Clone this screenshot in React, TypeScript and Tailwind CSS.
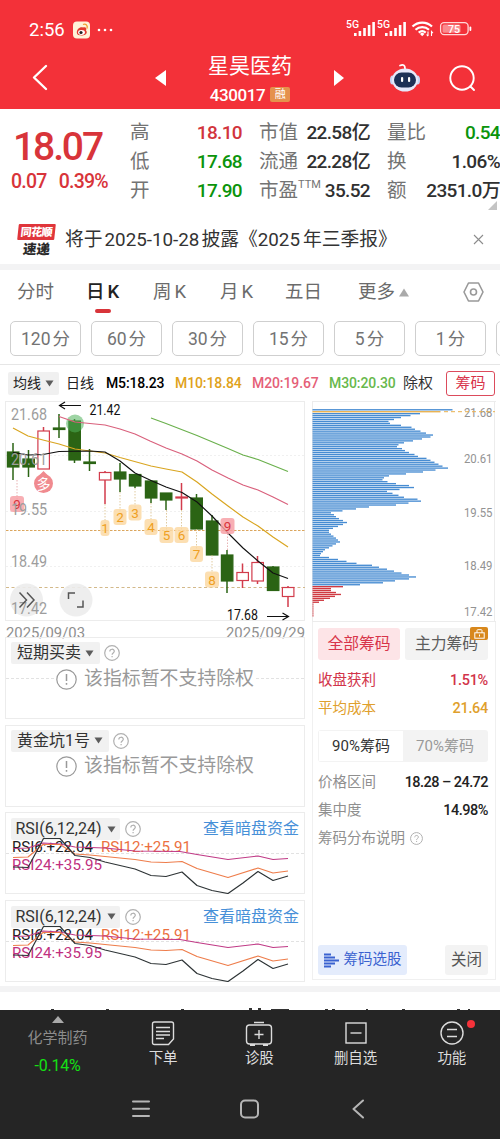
import { useState } from 'react'

const candles = [
  { x: 13, top: 452, bottom: 467, high: 443, low: 480, up: false },
  { x: 28.5, top: 459, bottom: 467, high: 450, low: 477, up: false },
  { x: 43.5, top: 431, bottom: 469, high: 427, low: 469, up: true },
  { x: 59, top: 428, bottom: 429.5, high: 414, low: 438, up: false },
  { x: 74.5, top: 421, bottom: 460, high: 419, low: 463, up: false },
  { x: 89.5, top: 462, bottom: 463.5, high: 449, low: 471, up: false },
  { x: 105, top: 472.5, bottom: 480, high: 471, low: 504, up: true },
  { x: 120, top: 472, bottom: 479, high: 463, low: 492, up: false },
  { x: 135, top: 474.5, bottom: 486, high: 474, low: 488, up: false },
  { x: 151, top: 481, bottom: 498, high: 480, low: 503, up: false },
  { x: 166, top: 493, bottom: 500, high: 493, low: 510, up: false },
  { x: 181.5, top: 497, bottom: 498, high: 483, low: 510, up: true },
  { x: 196.5, top: 498, bottom: 529, high: 494, low: 529, up: false },
  { x: 212, top: 521, bottom: 555, high: 515, low: 555, up: false },
  { x: 227, top: 555, bottom: 581, high: 550, low: 593, up: false },
  { x: 242.5, top: 572.5, bottom: 580.5, high: 563.5, low: 588, up: true },
  { x: 257.5, top: 562.5, bottom: 581, high: 556, low: 584, up: true },
  { x: 273, top: 567, bottom: 590.5, high: 566, low: 590, up: false },
  { x: 288, top: 587.5, bottom: 596.5, high: 586, low: 607, up: true },
]

const marks = [
  { n: '9', x: 17, y: 504, w: 14, from: 480, hot: true },
  { n: '1', x: 105, y: 528, w: 9, from: 504, hot: false },
  { n: '2', x: 120, y: 517, w: 13, from: 492, hot: false },
  { n: '3', x: 135, y: 512.5, w: 13, from: 488, hot: false },
  { n: '4', x: 151, y: 527, w: 13, from: 503, hot: false },
  { n: '5', x: 166.5, y: 535, w: 14, from: 510, hot: false },
  { n: '6', x: 181.5, y: 535, w: 14, from: 510, hot: false },
  { n: '7', x: 196.5, y: 554, w: 13, from: 529, hot: false },
  { n: '8', x: 212, y: 579.5, w: 14, from: 555, hot: false },
  { n: '9', x: 227.5, y: 526, w: 14, from: 550, hot: true },
]

const chips = [
  140, 128, 107.5, 98, 88.5, 81.5, 76, 77.5, 88.5, 99, 102.5, 108, 113.5, 120.5, 118, 109.5, 100.5, 91.5,
  86, 84.5, 89.5, 92.5, 96.5, 102, 105.5, 114, 118, 122, 126, 130, 135.5, 123, 110.5, 93.5, 76.5, 71.5,
  70, 75, 83.5, 96.5, 101.5, 87, 74.5, 80, 86, 91.5, 105, 108.5, 96, 83.5, 56.5, 43.5, 30, 18.5, 21.5,
  23.5, 26.5, 30.5, 34.5, 30.5, 25.5, 20.5, 16.5, 16.5, 18.5, 21, 23.5, 25.5, 27.5, 23.5, 20, 16.5, 12.5,
  10.5, 8.5, 7.5, 16.5, 25.5, 34, 44, 59.5, 66.5, 74.5, 81.5, 89, 96.5, 103.5, 96.5, 82.5, 70.5, 47.5,
  30.5, 18.5, 18.5, 23.5, 28.5, 22.5, 17.5, 11.5, 6.5, 1, 1, 1, 1, 1, 1, 1,
]
const FIRST_RED = 91

const axis = [
  { label: '21.68', left: 420, right: 416 },
  { label: '20.61', left: 464.5, right: 462 },
  { label: '19.55', left: 515, right: 515.5 },
  { label: '18.49', left: 566.5, right: 569 },
  { label: '17.42', left: 613.5, right: 614.5 },
]

const quotes = [
  [
    { label: '高', value: '18.10', color: 'text-[#d2343c]' },
    { label: '低', value: '17.68', color: 'text-[#0b940b]' },
    { label: '开', value: '17.90', color: 'text-[#0b940b]' },
  ],
  [
    { label: '市值', value: '22.58亿', color: 'text-[#303030]' },
    { label: '流通', value: '22.28亿', color: 'text-[#303030]' },
    { label: '市盈', sup: 'TTM', value: '35.52', color: 'text-[#303030]' },
  ],
  [
    { label: '量比', value: '0.54', color: 'text-[#0b940b]' },
    { label: '换', value: '1.06%', color: 'text-[#303030]' },
    { label: '额', value: '2351.0万', color: 'text-[#303030]' },
  ],
]
const quoteWidths = ['ml-[130px] w-[112px]', 'ml-[17px] w-[111px]', 'ml-[17px] w-[113px]']

const tabs = [
  ['分时', ''],
  ['日', 'K'],
  ['周', 'K'],
  ['月', 'K'],
  ['五日', ''],
]
const periods = [120, 60, 30, 15, 5, 1]

function StatusBar() {
  return (
    <div className="flex h-[50px] items-end pb-[10px] pl-[29px]">
      <span className="w-[44px] text-[18.500px] leading-5">2:56</span>
      <svg width="42" height="20" viewBox="0 0 42 20">
        <rect x="0" y="1.500" width="17" height="17" rx="4" fill="#fff3d8" />
        <path d="M4 13.500c-1-4 3-7 6-6 3-1 4 1 3 3 2 2 0 5-4 5-3 0-5-1-5-2z" fill="#e33a2e" />
        <ellipse cx="8.500" cy="12.500" rx="3.400" ry="2.400" fill="#fff" />
        <circle cx="8" cy="12.500" r="1.600" fill="#222" />
        <path d="M10 4.500c3-1 5 1 4 4" fill="none" stroke="#f0a030" strokeWidth="1.300" />
        <circle cx="26" cy="10" r="1.300" fill="#fff" />
        <circle cx="32" cy="10" r="1.300" fill="#fff" />
        <circle cx="38" cy="10" r="1.300" fill="#fff" />
      </svg>
      <svg className="mr-[26px] ml-auto" width="130" height="22" viewBox="344 19 130 22" fill="#fff">
        {[0, 31].map((dx) => (
          <g key={dx}>
            <text x={346 + dx} y="29" fontSize="10.500" fontWeight="500" textLength="13" lengthAdjust="spacingAndGlyphs">5G</text>
            <rect x={354 + dx} y="34" width="2.600" height="3" />
            <rect x={358.6 + dx} y="32" width="2.600" height="5" />
            <rect x={363.2 + dx} y="29" width="2.600" height="8" />
            <rect x={367.8 + dx} y="26" width="2.600" height="11" />
            <rect x={372.3 + dx} y="23" width="2.600" height="14" />
          </g>
        ))}
        <g fill="none" stroke="#fff" strokeWidth="2.200">
          <path d="M412.500 27.500a14 14 0 0 1 19.500 0" />
          <path d="M415.500 30.700a10 10 0 0 1 13.500 0" />
          <path d="M418.700 33.600a5.500 5.500 0 0 1 7 0" />
        </g>
        <path d="M422.200 37.300l-2.200-2.300a3 3 0 0 1 4.400 0z" />
        <path d="M428 32.500v4.500M426.600 35.500l1.400 1.700M431.500 37v-4.500l1.400 1.700" stroke="#fff" strokeWidth="1.100" fill="none" />
        <rect x="440.600" y="23.600" width="27.500" height="12" rx="3.500" fill="none" stroke="#ffd9d9" strokeWidth="1.300" />
        <rect x="442.500" y="25.500" width="18" height="8.200" rx="1.500" fill="#fa8b8f" />
        <rect x="469.500" y="27.500" width="1.800" height="4.500" rx="0.900" />
        <text x="448" y="33.500" fontSize="10.500" fontWeight="500" textLength="12">75</text>
      </svg>
    </div>
  )
}

function TitleBar() {
  return (
    <div className="flex h-[59px] items-center pb-1">
      <svg className="ml-[32px]" width="16" height="27" viewBox="0 0 16 27" fill="none" stroke="#fff" strokeWidth="2.400" strokeLinecap="round" strokeLinejoin="round">
        <path d="M14 2L2 13.500L14 25" />
      </svg>
      <svg className="ml-[107px]" width="11" height="16" viewBox="0 0 11 16" fill="#fff">
        <path d="M11 0v16L0 8z" />
      </svg>
      <div className="ml-6 flex w-[120px] flex-col items-center pt-[4px]">
        <h1 className="text-[21px] leading-[30px]">星昊医药</h1>
        <div className="flex h-[28px] items-center gap-[5px]">
          <span className="pt-px text-[17px] leading-5 font-medium tracking-[-0.400px]">430017</span>
          <span className="flex h-[15px] w-5 items-center justify-center rounded-[2px] bg-[#e5914c] text-[11px] leading-none">融</span>
        </div>
      </div>
      <svg className="ml-6" width="10" height="16" viewBox="0 0 10 16" fill="#fff">
        <path d="M0 0v16L10 8z" />
      </svg>
      <svg className="ml-[45px]" width="32" height="30" viewBox="0 0 32 30">
        <path d="M11 2.500q5-2 5 3" fill="none" stroke="#fff" strokeWidth="1.800" strokeLinecap="round" />
        <ellipse cx="3.500" cy="17" rx="2.500" ry="4.500" fill="#c9d5f5" />
        <ellipse cx="28.500" cy="17" rx="2.500" ry="4.500" fill="#c9d5f5" />
        <ellipse cx="16" cy="17" rx="13" ry="11.500" fill="#e6e9fb" />
        <rect x="5" y="9.500" width="22" height="15" rx="7.500" fill="#1d3157" />
        <rect x="12" y="14" width="2.200" height="5" rx="1" fill="#fff" />
        <rect x="19" y="14" width="2.200" height="5" rx="1" fill="#fff" />
      </svg>
      <svg className="ml-[28px]" width="27" height="28" viewBox="0 0 27 28" fill="none" stroke="#fff" strokeWidth="1.900" strokeLinecap="round">
        <circle cx="13" cy="14" r="11.700" />
        <path d="M21.500 22.500l3.500 3.500" />
      </svg>
    </div>
  )
}

function QuotePanel() {
  return (
    <section className="relative flex h-[106px]">
      <div className="absolute top-[19px] left-0 w-[122px] text-[#d8343a]">
        <p className="pl-[13px] text-[39px] leading-[39px] font-medium tracking-[-2.100px]">18.07</p>
        <p className="mt-[5px] flex gap-3 pl-[11px] text-[19.500px] leading-5 font-medium tracking-[-0.750px]">
          <span>0.07</span>
          <span>0.39%</span>
        </p>
      </div>
      {quotes.map((col, i) => (
        <dl key={i} className={`${quoteWidths[i]} shrink-0 pt-[9px]`}>
          {col.map((q) => (
            <div key={q.label} className="flex h-[29px] items-center justify-between whitespace-nowrap">
              <dt className="flex text-[19.500px] leading-7 text-[#737373]">
                {q.label}
                {'sup' in q && <span className="-mt-1 text-[11px] leading-6">{q.sup}</span>}
              </dt>
              <dd className={`${q.color} text-[19px] leading-7 font-medium tracking-[-0.650px]`}>{q.value}</dd>
            </div>
          ))}
        </dl>
      ))}
      <svg className="absolute right-[3px] bottom-[5px]" width="9" height="9" viewBox="0 0 9 9" fill="#c4c4c4">
        <path d="M9 0v9H0z" />
      </svg>
    </section>
  )
}

function Notice() {
  return (
    <section className="flex h-[49px] items-center pl-[17px]">
      <div className="flex w-[38px] flex-col items-center pt-[1px]">
        <span className="flex h-[16px] w-[37px] -skew-x-6 items-center justify-center rounded-[1px] bg-[#e0353b] text-[11px] leading-none font-black tracking-[-0.500px] text-white">
          同花顺
        </span>
        <span className="mt-[2px] -skew-x-6 text-[13.500px] leading-[14px] font-black text-[#2b2b2b]">速递</span>
      </div>
      <p className="ml-[10px] text-[18.800px] leading-7 whitespace-nowrap text-[#333]">
        将于<span className="mx-[2px]">2025-10-28</span>披露《<span className="mr-[3px]">2025</span>年三季报》
      </p>
      <svg className="mr-4 ml-auto" width="11" height="11" viewBox="0 0 11 11" stroke="#8c8c8c" strokeWidth="1.100">
        <path d="M1 1l9 9M10 1l-9 9" />
      </svg>
    </section>
  )
}

function Tabs() {
  const [active, setActive] = useState(1)
  return (
    <nav className="flex h-[46px] items-start pt-2 pl-[2px] text-[18.500px] leading-7 text-[#6b6b6b]">
      {tabs.map(([name, suffix], i) => (
        <button
          key={name}
          onClick={() => setActive(i)}
          className={`relative flex w-[67px] justify-center gap-[3px] ${i === active ? 'font-medium text-[#222]' : ''}`}
        >
          {name}
          {suffix && <span>{suffix}</span>}
          {i === active && <span className="absolute top-[31px] h-1 w-4 rounded-full bg-[#d8343a]" />}
        </button>
      ))}
      <button className="ml-[21px] flex items-center gap-[4px]">
        更多
        <svg width="10" height="9" viewBox="0 0 10 9" fill="#aaa">
          <path d="M5 0.500L10 8.500H0z" />
        </svg>
      </button>
      <svg className="mt-[4px] mr-4 ml-auto" width="21" height="20" viewBox="0 0 21 20" fill="none" stroke="#999" strokeWidth="1.600">
        <path d="M5.500 1h10L20 10l-4.500 9h-10L1 10z" strokeLinejoin="round" />
        <circle cx="10.500" cy="10" r="3" />
      </svg>
    </nav>
  )
}

function Periods() {
  return (
    <div className="flex h-[49px] gap-[10px] overflow-hidden border-b border-[#e6e6e6] pt-[5px] pl-[10px]">
      {periods.map((p) => (
        <button
          key={p}
          className="flex h-[35px] w-[71px] shrink-0 items-center justify-center gap-[2px] rounded-[5px] border border-[#cfcfcf] text-[17.500px] leading-7 text-[#737373]"
        >
          <span>{p}</span>
          <span>分</span>
        </button>
      ))}
      <span className="h-[35px] w-[71px] shrink-0 rounded-[5px] border border-[#cfcfcf]" />
    </div>
  )
}

function Caret() {
  return (
    <svg width="9" height="7" viewBox="0 0 9 7" fill="#5c5c5c">
      <path d="M0.500 0.500h8L4.500 6.500z" />
    </svg>
  )
}

function Help({ size = 16 }: { size?: number }) {
  return (
    <svg width={size} height={size} viewBox="0 0 16 16" fill="none" stroke="#b0b0b0" strokeWidth="1.200">
      <circle cx="8" cy="8" r="7.300" />
      <path d="M5.800 6.500c0-3 4.500-3 4.500-0.200 0 1.700-2.200 1.700-2.200 3.400M8.100 11v1.300" />
    </svg>
  )
}

function Averages() {
  return (
    <div className="flex h-[36px] items-center pl-2 text-[14px] leading-none font-medium whitespace-nowrap">
      <button className="flex h-[23px] w-[51px] items-center justify-center gap-[4px] rounded-[2px] bg-[#f0f0f0] font-normal text-[#222]">
        均线
        <Caret />
      </button>
      <span className="ml-[7px] w-[40px] font-normal text-[#222]">日线</span>
      <span className="w-[69px] tracking-[-0.150px] text-black">M5:18.23</span>
      <span className="w-[77px] tracking-[-0.100px] text-[#e0a21b]">M10:18.84</span>
      <span className="w-[77px] tracking-[-0.100px] text-[#e55f78]">M20:19.67</span>
      <span className="w-[74px] tracking-[-0.100px] text-[#67b84c]">M30:20.30</span>
      <span className="text-[15px] font-normal text-[#333]">除权</span>
      <button className="mr-[5px] ml-auto h-[25px] w-[49px] rounded-[3px] border border-[#dc4b5c] text-[15px] font-normal text-[#d8344a]">
        筹码
      </button>
    </div>
  )
}

function CandleChart() {
  return (
    <svg className="block overflow-visible" width="300" height="237" viewBox="5 401 300 237">
      <rect x="5.500" y="401.500" width="299" height="219" fill="none" stroke="#ececec" />
      <path d="M6 455.500H305M6 511.500H305M6 566.500H305" stroke="#f0f0f0" strokeDasharray="2 2" />
      <path d="M6 530.500H305" stroke="#dba65e" strokeDasharray="2.500 1.500" />
      <path d="M6 587.500H305" stroke="#d3b98a" strokeDasharray="3 2.500" />

      {candles.map((c) => {
        const color = c.up ? '#d23c4c' : '#2b6414'
        return (
          <g key={c.x} stroke={color}>
            <path d={`M${c.x} ${c.high}V${c.top}M${c.x} ${c.bottom}V${c.low}`} strokeWidth="1.500" />
            <rect x={c.x - 5.6} y={c.top} width="11.500" height={c.bottom - c.top} fill={c.up ? '#fff' : color} strokeWidth="1.200" />
          </g>
        )
      })}
      <circle cx="75" cy="423.500" r="9" fill="#4fb05a" opacity="0.550" />

      <g fill="none" strokeWidth="1.150" strokeLinejoin="round">
        <path stroke="#6ab04c" d="M151 418L166 423.500L197 435.500L228 448.500L243 455L258 459.500L288 471.500" />
        <path stroke="#d9607c" d="M59 416.500L75 422L90 423.500L105 425L120 429L135 434L150 441L166 448L182 454L197 461L212 470L228 478L243 485L258 490L273 497L288 504.500" />
        <path stroke="#d9a520" d="M13 428L28 436L43 440L59 444L75 449L90 451L105 453L120 457.500L151 466L166 469L182 472L197 482L212 494L228 506L243 517L258 526L273 537L288 547" />
        <path stroke="#111" d="M13 452.500L28 455L43 454.500L59 451.500L90 451L105 452L120 461L135 473L151 480.500L166 487L182 492.500L197 502L212 516L228 533L243 548L258 561L273 573L288 578.500" />
      </g>

      {marks.map((m) => (
        <g key={m.x}>
          <path d={`M${m.x} ${m.from}V${m.y}`} stroke={m.hot ? '#e2a0a0' : '#d8bd86'} strokeDasharray="1.500 1.500" strokeWidth="0.800" />
          <rect x={m.x - m.w / 2} y={m.y - 8} width={m.w} height="16" rx="3" fill={m.hot ? '#f7a1a7' : '#fcd9a5'} opacity="0.850" />
          <text x={m.x} y={m.y + 5} textAnchor="middle" fontSize="13.500" fill={m.hot ? '#d9343c' : '#ef9f22'}>
            {m.n}
          </text>
        </g>
      ))}
      <path d="M43.500 471l-5 5h10z" fill="#f08a8f" />
      <circle cx="43.500" cy="483.500" r="9.500" fill="#f08a8f" />
      <text x="43.500" y="489" textAnchor="middle" fontSize="14" fill="#fff">多</text>

      <g fill="#ededed" opacity="0.900">
        <circle cx="26.500" cy="600" r="16.500" />
        <circle cx="76" cy="600" r="16.500" />
      </g>
      <g fontSize="16" fill="#9d9d9d">
        {axis.map((a) => (
          <text key={a.label} x="11" y={a.left} textLength="36" lengthAdjust="spacingAndGlyphs">{a.label}</text>
        ))}
      </g>
      <g fill="none" stroke="#555" strokeWidth="1.500">
        <path d="M19.500 592.500L26.500 600L19.500 607.500M27 592.500L34 600L27 607.500" />
        <path d="M68.500 599V593H75M83 600.500V607H77" />
      </g>

      <g fontSize="14" fill="#111">
        <text x="89.500" y="414.500" textLength="31" lengthAdjust="spacingAndGlyphs">21.42</text>
        <text x="227" y="620" textLength="31" lengthAdjust="spacingAndGlyphs">17.68</text>
      </g>
      <path d="M81 405.500H59.500M65 402L59.500 405.500L65 409M267 616.500H288.500M282.500 613L288.500 616.500L282.500 620" fill="none" stroke="#111" strokeWidth="1.200" />

      <g fontSize="15" fill="#8f8f8f">
        <text x="6" y="638" textLength="79" lengthAdjust="spacingAndGlyphs">2025/09/03</text>
        <text x="226" y="638" textLength="79" lengthAdjust="spacingAndGlyphs">2025/09/29</text>
      </g>
    </svg>
  )
}

function UnsupportedPanel({ name, dashed }: { name: string; dashed?: boolean }) {
  return (
    <div className="relative h-[82px] border border-[#ececec] pt-[4px]">
      <div className="flex h-[22px] items-center gap-[4px] pl-[5px]">
        <button className="flex h-[22px] items-center gap-[4px] rounded-[2px] bg-[#f1f1f1] px-[6px] text-[16px] leading-none text-[#333]">
          {name}
          <Caret />
        </button>
        <Help />
      </div>
      {dashed && <span className="absolute top-[40px] left-0 w-full border-t border-dashed border-[#e2e2e2]" />}
      <div className="relative mx-auto mt-[3px] flex h-[24px] w-[202px] items-center justify-center gap-[7px] bg-white text-[18.900px] leading-none whitespace-nowrap text-[#999]">
        <svg className="shrink-0" width="21" height="21" viewBox="0 0 21 21" fill="none" stroke="#999" strokeWidth="1.200">
          <circle cx="10.500" cy="10.500" r="9.700" />
          <path d="M10.500 5v7M10.500 14v1.800" strokeWidth="1.500" />
        </svg>
        该指标暂不支持除权
      </div>
    </div>
  )
}

function RsiPanel() {
  return (
    <div className="relative h-[82px] border border-[#ececec] pt-[5px]">
      <div className="flex h-[22px] items-center pr-[5px] pl-[5px]">
        <button className="flex h-[22px] w-[109px] items-center justify-center gap-[5px] rounded-[2px] bg-[#f1f1f1] text-[16px] leading-none whitespace-nowrap text-[#333]">
          <span>RSI(6,12,24)</span>
          <Caret />
        </button>
        <span className="ml-[5px]"><Help /></span>
        <a href="#" className="ml-auto text-[16px] leading-none text-[#4790d8]">查看暗盘资金</a>
      </div>
      <svg className="absolute top-[-1px] left-[-1px]" width="300" height="82" viewBox="5 812 300 82" fontSize="15.500">
        <path d="M6 853.500H305" stroke="#e2e2e2" strokeDasharray="3 2" />
        <text x="12" y="852" fill="#222" textLength="81" lengthAdjust="spacingAndGlyphs">RSI6:+22.04</text>
        <text x="101" y="852" fill="#ec7040" textLength="90" lengthAdjust="spacingAndGlyphs">RSI12:+25.91</text>
        <text x="12" y="870" fill="#c03080" textLength="90" lengthAdjust="spacingAndGlyphs">RSI24:+35.95</text>
        <g fill="none" strokeWidth="1.200" strokeLinejoin="round">
          <path stroke="#c03a86" d="M13 848.500L28 848L43 843L60 844L75 847L105 848L135 851L180 851.500L197 854.500L228 859.500L258 856L273 859.500L288 858.500" />
          <path stroke="#ee7d4b" d="M13 857.500L28 857L43 844.500L60 844.500L75 854L90 855L105 856.500L135 859.500L151 862L166 862.500L182 861.500L197 868.500L228 877.500L258 868L273 873L288 871" />
          <path stroke="#2e3436" d="M13 867L28 867.500L43.500 838.500L60 838.500L75 855.500L90 857.500L105 862L135 869L151 875.500L166 876.500L182 872L197 885.500L212 890.500L228 893.500L243 883L258 871.500L273 880.500L288 876" />
        </g>
      </svg>
    </div>
  )
}

function ChipChart() {
  return (
    <svg className="block overflow-visible" width="184" height="221" viewBox="312 400 184 221">
      <path d="M312 400.500H496M312 620.500H496M312.500 400V621M494.500 400V621" stroke="#ececec" fill="none" />
      {chips.map((w, i) => {
        const y = 408.1 + i * 1.944
        let color = '#478cd2'
        if (i === 1) color = '#e9b04e'
        if (i >= FIRST_RED) color = '#cf3a42'
        return <rect key={i} x="312.500" y={y} width={w} height="1.350" fill={color} />
      })}
      <g fontSize="12.800" fill="#939393">
        {axis.map((a) => (
          <text key={a.label} x="464" y={a.right} textLength="28.500" lengthAdjust="spacingAndGlyphs">{a.label}</text>
        ))}
      </g>
      <path d="M444 410.700H495" stroke="#e9b04e" strokeDasharray="4 3" />
    </svg>
  )
}

function ChipPanel() {
  return (
    <aside className="flex h-[579px] w-[184px] flex-col">
      <ChipChart />
      <div className="flex grow flex-col border-x border-b border-[#f0f0f0] pr-[7px] pl-[5px] text-[14.500px] leading-5 whitespace-nowrap">
        <div className="mt-[6px] flex justify-between text-[15.800px]">
          <button className="h-[32px] w-[82px] rounded-[3px] bg-[#fde4e7] text-[#d8344a]">全部筹码</button>
          <button className="relative h-[32px] w-[83px] rounded-[3px] bg-[#f3f3f3] text-[#5c5c5c]">
            主力筹码
            <span className="absolute -top-[1px] right-0 flex h-[13px] w-[18px] items-center justify-center rounded-[2px] bg-[#d8881c]">
              <svg width="11" height="10" viewBox="0 0 11 10" fill="none" stroke="#fff" strokeWidth="1">
                <rect x="0.800" y="3.800" width="9.400" height="5.400" />
                <path d="M3 3.800V1.500q0-0.800 0.800-0.800h3.400q0.800 0 0.800 0.800v2.300M5.500 5.500v2" />
              </svg>
            </span>
          </button>
        </div>
        <div className="mt-[9px] flex h-[23px] items-center justify-between text-[#d2344a]">
          <span>收盘获利</span>
          <span className="font-medium tracking-[-0.300px]">1.51%</span>
        </div>
        <div className="mt-[5px] flex h-[23px] items-center justify-between text-[#dfa02c]">
          <span>平均成本</span>
          <span className="font-medium tracking-[-0.300px]">21.64</span>
        </div>
        <div className="mt-[10px] flex h-[32px] rounded-[3px] bg-[#f3f3f3] p-px text-[15px]">
          <button className="w-1/2 bg-white text-[#333]">90%筹码</button>
          <button className="w-1/2 text-[#999]">70%筹码</button>
        </div>
        <div className="mt-[9px] flex h-[23px] items-center justify-between">
          <span className="text-[#8f8f8f]">价格区间</span>
          <span className="font-medium tracking-[-0.550px] text-[#222]">18.28 – 24.72</span>
        </div>
        <div className="mt-[5px] flex h-[23px] items-center justify-between">
          <span className="text-[#8f8f8f]">集中度</span>
          <span className="font-medium tracking-[-0.500px] text-[#222]">14.98%</span>
        </div>
        <div className="mt-[5px] flex h-[23px] items-center gap-[5px] text-[#8f8f8f]">
          筹码分布说明
          <Help size={13} />
        </div>
        <div className="mt-auto mb-[4px] flex justify-between">
          <button className="flex h-[30px] w-[89px] items-center justify-center gap-[4px] rounded-[3px] bg-[#e4ecfc] text-[#3a62d0]">
            <svg width="16" height="15" viewBox="0 0 16 15" fill="#3a62d0">
              <path d="M0 0.500h7v2H0zM0 3.500h11v2H0zM0 6.500h15v2H0zM0 9.500h11v2H0zM0 12.500h7v2H0z" />
            </svg>
            筹码选股
          </button>
          <button className="h-[30px] w-[43px] rounded-[3px] bg-[#f3f3f3] text-[15.500px] text-[#555]">关闭</button>
        </div>
      </div>
    </aside>
  )
}

function BottomBar() {
  return (
    <footer className="bg-[#252525] text-[#dcdcdc]">
      <div className="flex h-[72px] text-[14.500px] leading-5">
        <div className="flex w-[115px] flex-col items-center pt-[6px]">
          <svg width="12" height="7" viewBox="0 0 12 7" fill="#aaa">
            <path d="M6 0L12 7H0z" />
          </svg>
          <span className="mt-[5px] text-[15px] text-[#8c8c8c]">化学制药</span>
          <span className="mt-[8px] text-[16px] tracking-[-0.200px] text-[#14e014]">-0.14%</span>
        </div>
        <button className="flex flex-1 flex-col items-center pt-[11px]">
          <svg width="26" height="25" viewBox="0 0 26 25" fill="none" stroke="#dcdcdc" strokeWidth="1.400">
            <path d="M4.500 1h17q2 0 2 2v15l-5 5.500h-14q-2 0-2-2V3q0-2 2-2zM6 6.500h14M6 10.500h14M6 14h14M6 17.500h8" />
          </svg>
          <span className="mt-[3px]">下单</span>
        </button>
        <button className="flex flex-1 flex-col items-center pt-[11px]">
          <svg width="28" height="25" viewBox="0 0 28 25" fill="none" stroke="#dcdcdc" strokeWidth="1.400">
            <path d="M9 1.500h10M14 9v9M9.500 13.500h9" />
            <rect x="1.500" y="4" width="25" height="19" rx="3" />
            <path d="M5 24h5M18 24h5" strokeWidth="1.800" />
          </svg>
          <span className="mt-[3px]">诊股</span>
        </button>
        <button className="flex flex-1 flex-col items-center pt-[11px]">
          <svg width="22" height="25" viewBox="0 0 22 25" fill="none" stroke="#dcdcdc" strokeWidth="1.400">
            <rect x="1" y="2" width="20" height="20" />
            <path d="M5.500 12h11" />
          </svg>
          <span className="mt-[3px]">删自选</span>
        </button>
        <button className="relative flex flex-1 flex-col items-center pt-[11px]">
          <svg width="24" height="25" viewBox="0 0 24 25" fill="none" stroke="#dcdcdc" strokeWidth="1.400">
            <circle cx="12" cy="12" r="11" />
            <path d="M7 8.500h10M7 15.500h10" />
          </svg>
          <span className="absolute top-[10px] right-[25px] h-2 w-2 rounded-full bg-[#f5323a]" />
          <span className="mt-[3px]">功能</span>
        </button>
      </div>
      <div className="flex h-[57px] items-start pt-[17px] pl-[132px]">
        <svg width="18" height="20" viewBox="0 0 18 20" stroke="#b5b5b5" strokeWidth="2" strokeLinecap="round">
          <path d="M1 2.500h16M1 9.800h16M1 17h16" />
        </svg>
        <svg className="ml-[90px]" width="19" height="20" viewBox="0 0 19 20" fill="none" stroke="#b5b5b5" strokeWidth="2">
          <rect x="1" y="1.500" width="17" height="17" rx="4" />
        </svg>
        <svg className="ml-[93px]" width="12" height="20" viewBox="0 0 12 20" fill="none" stroke="#b5b5b5" strokeWidth="2" strokeLinecap="round" strokeLinejoin="round">
          <path d="M11 1.500L1.500 10L11 18.500" />
        </svg>
      </div>
    </footer>
  )
}

export default function App() {
  return (
    <div className="flex h-[1139px] w-[500px] flex-col overflow-hidden bg-white font-[Roboto,'Noto_Sans_CJK_SC',sans-serif]">
      <header className="h-[109px] shrink-0 bg-[#f33139] text-white">
        <StatusBar />
        <TitleBar />
      </header>
      <QuotePanel />
      <Notice />
      <div className="h-[6px] shrink-0 bg-[#f3f3f4]" />
      <Tabs />
      <Periods />
      <Averages />
      <main className="flex h-[585px] shrink-0 gap-[7px] pl-[5px]">
        <div className="flex w-[300px] flex-col">
          <CandleChart />
          <div className="-mt-px flex flex-col gap-[5.500px]">
            <UnsupportedPanel name="短期买卖" dashed />
            <UnsupportedPanel name="黄金坑1号" />
            <RsiPanel />
            <RsiPanel />
          </div>
        </div>
        <ChipPanel />
      </main>
      <div className="h-[6px] shrink-0 bg-[#f3f3f4]" />
      <svg className="block shrink-0" width="500" height="18" viewBox="0 0 500 18" fill="#333">
        <path d="M249 16h3v2h-3zM258 16h3v2h-3zM271 17h18v1h-18zM51 17h3v1h-3zM106 17h3v1h-3zM181 17h3v1h-3zM325 17h3v1h-3zM332 17h3v1h-3zM366 17h2v1h-2zM402 17h3v1h-3zM457 17h3v1h-3zM468 17h2v1h-2z" />
      </svg>
      <BottomBar />
    </div>
  )
}
